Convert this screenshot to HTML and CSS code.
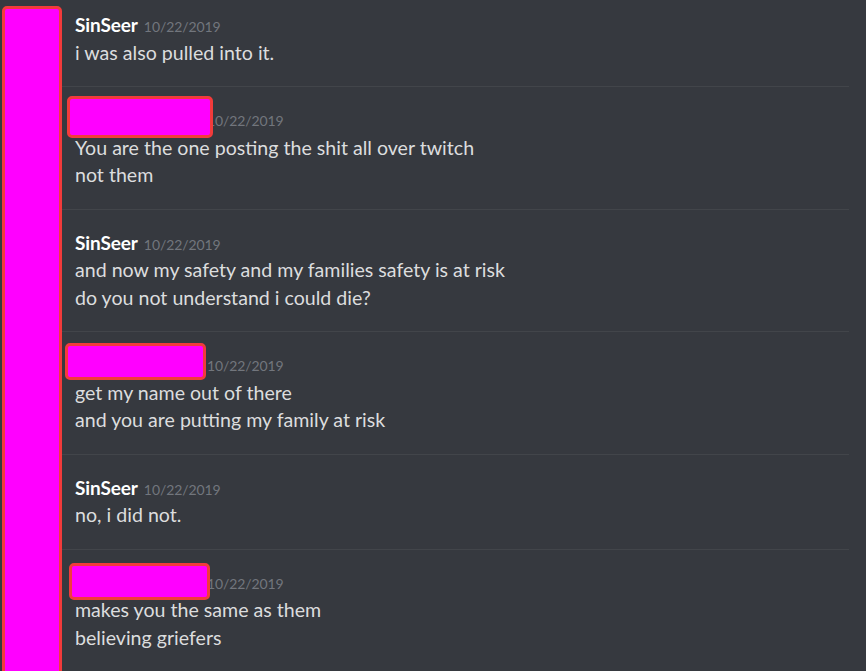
FILE: index.html
```html
<!DOCTYPE html>
<html>
<head>
<meta charset="utf-8">
<link rel="stylesheet" href="styles.css">
</head>
<body>
<div class="chat">
  <div class="avatar-col"><div class="redact-bar"></div></div>
  <div class="messages">
    <div class="msg first">
      <div class="header"><span class="name">SinSeer</span><span class="time">10/22/2019</span></div>
      <div class="line">i was also pulled into it.</div>
    </div>
    <div class="msg">
      <div class="header"><span class="name hidden-name"><span class="redact r1"></span></span><span class="time">10/22/2019</span></div>
      <div class="line">You are the one posting the shit all over twitch</div>
      <div class="line">not them</div>
    </div>
    <div class="msg">
      <div class="header"><span class="name">SinSeer</span><span class="time">10/22/2019</span></div>
      <div class="line">and now my safety and my families safety is at risk</div>
      <div class="line">do you not understand i could die?</div>
    </div>
    <div class="msg">
      <div class="header"><span class="name hidden-name"><span class="redact r2"></span></span><span class="time">10/22/2019</span></div>
      <div class="line">get my name out of there</div>
      <div class="line">and you are putting my family at risk</div>
    </div>
    <div class="msg">
      <div class="header"><span class="name">SinSeer</span><span class="time">10/22/2019</span></div>
      <div class="line">no, i did not.</div>
    </div>
    <div class="msg">
      <div class="header"><span class="name hidden-name"><span class="redact r3"></span></span><span class="time">10/22/2019</span></div>
      <div class="line">makes you the same as them</div>
      <div class="line">believing griefers</div>
    </div>
  </div>
</div>
</body>
</html>
```
FILE: styles.css
```css
html, body {
  margin: 0;
  padding: 0;
  background: #36393f;
  height: 100%;
  overflow: hidden;
}
body {
  font-family: Lato, "Open Sans", sans-serif;
}
.chat {
  display: flex;
  width: 866px;
  height: 671px;
  overflow: hidden;
}
.avatar-col {
  width: 62px;
  flex: none;
  padding: 6px 0 0 2px;
  box-sizing: border-box;
}
.redact-bar {
  width: 60px;
  height: 700px;
  background: #ff00ff;
  border: 3px solid #f23b3b;
  border-radius: 5px;
  box-sizing: border-box;
}
.messages {
  width: 787px;
  flex: none;
}
.msg {
  border-top: 1px solid #42454a;
  padding: 20px 0 20px 13px;
}
.msg.first {
  border-top: none;
  padding-top: 12px;
}
.header {
  height: 26.5px;
  line-height: 26.5px;
  white-space: nowrap;
}
.name {
  color: #ffffff;
  font-size: 19px;
  font-weight: 700;
  letter-spacing: -0.1px;
}
.hidden-name {
  display: inline-block;
  width: 128px;
  height: 26.5px;
  position: relative;
  vertical-align: top;
}
.redact {
  position: absolute;
  background: #ff00ff;
  border: 3px solid #f23b3b;
  border-radius: 5px;
  box-sizing: border-box;
}
.r1 { left: -8px; top: -11px; width: 146px; height: 42px; }
.r2 { left: -10px; top: -9px; width: 141px; height: 37px; }
.r3 { left: -6px; top: -7px; width: 141px; height: 37px; }
.time {
  color: #72767d;
  font-size: 14px;
  margin-left: 6px;
  letter-spacing: -0.1px;
}
.hidden-name + .time {
  margin-left: 4px;
}
.line {
  color: #dcddde;
  font-size: 19.6px;
  line-height: 27.5px;
  white-space: nowrap;
}
```
